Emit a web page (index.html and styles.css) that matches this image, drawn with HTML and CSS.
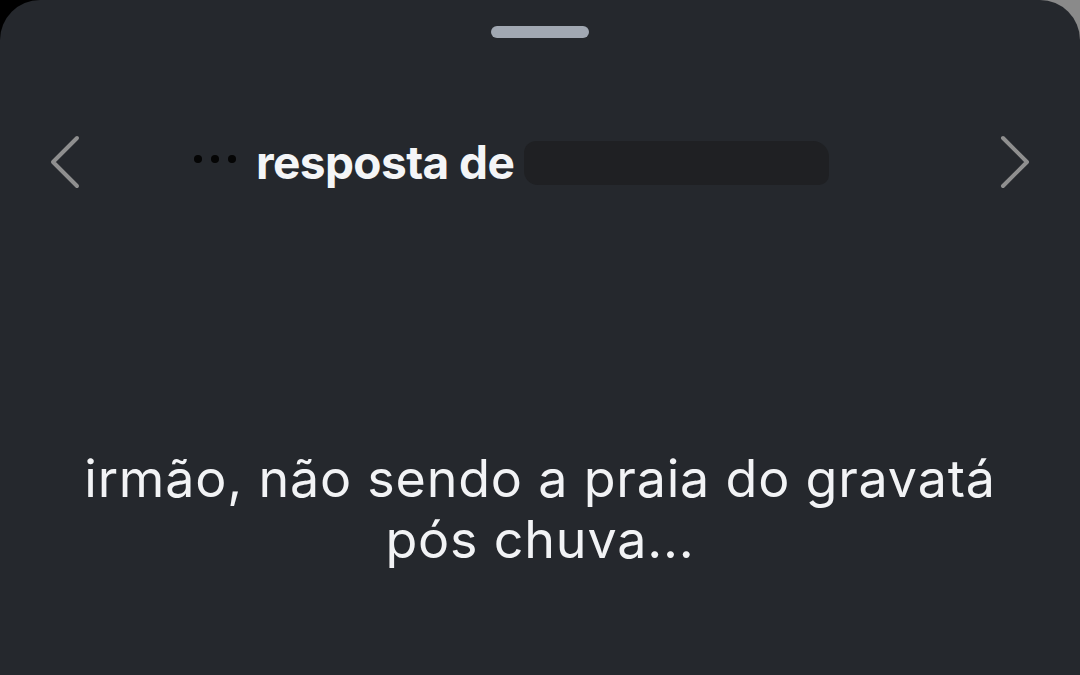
FILE: index.html
```html
<!DOCTYPE html>
<html lang="pt">

<head>
    <meta charset="UTF-8">
    <meta name="viewport" content="width=device-width, initial-scale=1.0">
    <title>Resposta</title>
    <link rel="stylesheet" href="styles.css">
</head>

<body>
    <div class="sheet">
        <div class="handle"></div>

        <div class="header">
            <span class="nav">
                <svg width="36" height="56" viewBox="0 0 36 56">
                    <polyline points="29,4 5,28 29,52" />
                </svg>
            </span>
            <div class="title">
                <span class="dots"><i></i><i></i><i></i></span>
                <span class="label">resposta de</span>
                <span class="hidden-name"></span>
            </div>
            <span class="nav next">
                <svg width="36" height="56" viewBox="0 0 36 56">
                    <polyline points="7,4 31,28 7,52" />
                </svg>
            </span>
        </div>

        <p class="message">
            irmão, não sendo a praia do gravatá<br>
            pós chuva...
        </p>
    </div>
</body>

</html>
```

FILE: styles.css
```css
body {
    margin: 0;
    height: 675px;
    overflow: hidden;
    background: linear-gradient(to right, #000 50%, #8a8a8a 50%);
}

.sheet {
    height: 675px;
    background: #25282d;
    border-radius: 40px 40px 0 0;
    overflow: hidden;
    font-family: "Inter", "Noto Sans", sans-serif;
}

.handle {
    width: 98px;
    height: 12px;
    margin: 26px auto 0;
    background: #a1a8b2;
    border-radius: 6px;
}

.header {
    display: flex;
    align-items: center;
    padding: 0 48px;
    margin-top: 96px;
}

.nav {
    display: flex;
    width: 36px;
}

.nav svg polyline {
    fill: none;
    stroke: #8f8f8f;
    stroke-width: 4;
    stroke-linecap: round;
    stroke-linejoin: round;
}

.next {
    margin-left: auto;
}

.title {
    display: flex;
    align-items: center;
    margin-left: 110px;
}

.dots {
    display: flex;
    gap: 9px;
    margin-right: 20px;
    margin-top: -6px;
}

.dots i {
    width: 8px;
    height: 8px;
    background: #050505;
    border-radius: 50%;
}

.label {
    color: #f4f5f7;
    font-size: 46px;
    font-weight: 700;
    letter-spacing: -0.6px;
}

.hidden-name {
    display: block;
    width: 305px;
    height: 44px;
    margin-left: 10px;
    margin-top: 2px;
    background: #1f2023;
    border-radius: 12px 16px 10px 14px;
}

.message {
    margin: 258px 0 0;
    text-align: center;
    color: #f2f3f5;
    font-size: 52px;
    line-height: 61px;
    letter-spacing: 0.8px;
}
```
